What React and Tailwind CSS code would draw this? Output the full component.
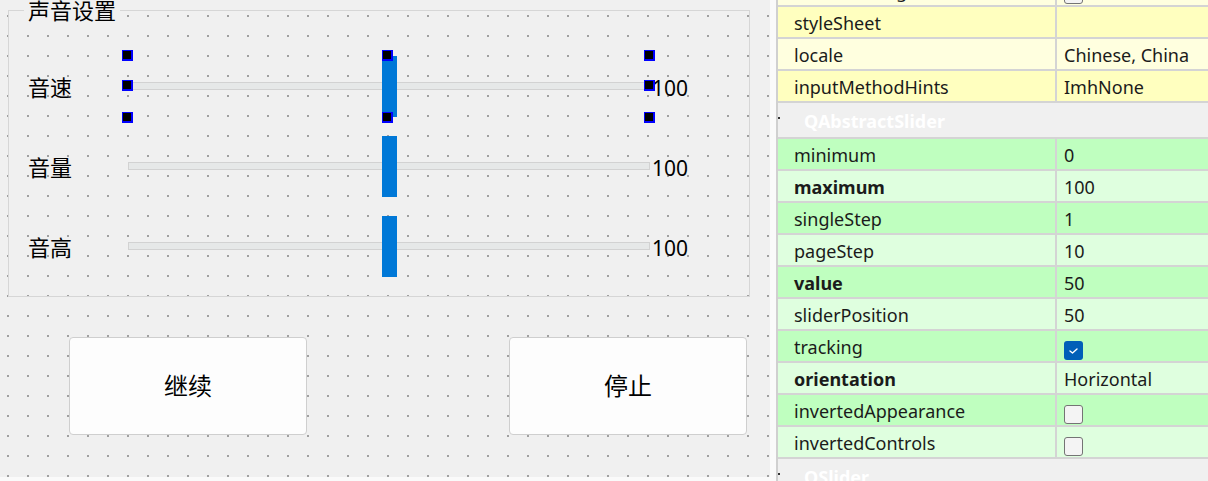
import React from "react";

const SelHandle = ({ className }) => (
  <div className={`absolute w-[11px] h-[11px] bg-[#0000ff] pl-[1px] pt-[1px] ${className}`}>
    <div className="w-[8px] h-[8px] bg-black" />
  </div>
);

const SliderRow = ({ label, selected }) => (
  <div className="flex items-center h-[62px] pl-[19px]">
    <div className="w-[100px] text-[22px] leading-[26px] text-black">{label}</div>
    <div className="relative w-[522px] h-[62px]">
      <div className="mt-[26px] h-[8px] bg-[#e6e8e8] border border-[#d2d2d2]" />
      <div className="absolute left-[254px] top-0 w-[15px] h-[61px] bg-[#0078d7]" />
      {selected && (
        <>
          <SelHandle className="left-[-6px] top-[-6px]" />
          <SelHandle className="left-[254px] top-[-6px]" />
          <SelHandle className="left-[516px] top-[-6px]" />
          <SelHandle className="left-[-6px] top-[24px]" />
          <SelHandle className="left-[516px] top-[24px]" />
          <SelHandle className="left-[-6px] top-[56px]" />
          <SelHandle className="left-[254px] top-[56px]" />
          <SelHandle className="left-[516px] top-[56px]" />
        </>
      )}
    </div>
    <div className="text-[21px] leading-[26px] text-black mt-[2px] ml-[2px]">100</div>
  </div>
);

const CheckBox = ({ checked }) =>
  checked ? (
    <div className="self-start mt-[7px] w-[19px] h-[19px] rounded-[3px] bg-[#005fb8] flex items-center justify-center">
      <svg width="19" height="19" viewBox="0 0 19 19">
        <path d="M6 10 L8.5 12 L13 8" fill="none" stroke="#ffffff" strokeWidth="1.4" strokeLinecap="round" strokeLinejoin="round" />
      </svg>
    </div>
  ) : (
    <div className="self-start mt-[7px] w-[19px] h-[19px] rounded-[3px] bg-[#f4f4f4] border border-[#747474]" />
  );

const PropRow = ({ name, value, bold, bg, check, className = "" }) => (
  <div className={`flex h-[32px] shrink-0 border-b-2 border-[#d4d4d4] ${bg} ${className}`}>
    <div
      className={`w-[279px] shrink-0 border-r-2 border-[#d4d4d4] pl-[16px] pt-[3px] flex items-center text-[18px] text-[#1b1b1b] ${
        bold ? "font-bold" : ""
      }`}
    >
      {name}
    </div>
    <div className="flex-1 pl-[7px] pt-[3px] flex items-center text-[18px] text-[#1b1b1b]">
      {check !== undefined ? <CheckBox checked={check} /> : value}
    </div>
  </div>
);

const HeaderRow = ({ title }) => (
  <div className="relative flex items-center h-[36px] shrink-0 border-b-2 border-[#d4d4d4] bg-[#f0f0f0] pl-[26px] pt-[2px]">
    <div className="absolute left-0 top-[14px] w-[2px] h-[2px] bg-[#333333]" />
    <span className="text-[18px] font-bold text-white">{title}</span>
  </div>
);

export default function App() {
  const Y = "bg-[#ffffbf]";
  const YL = "bg-[#ffffdf]";
  const G = "bg-[#bfffbf]";
  const GL = "bg-[#dfffdf]";
  return (
    <div className="w-[1208px] h-[481px] flex overflow-hidden bg-[#fafafa] font-['Noto_Sans','Noto_Sans_CJK_SC',sans-serif]">
      {/* left designer canvas */}
      <div className="w-[776px] h-full shrink-0 bg-[#fafafa]">
        <div className="w-[770px] h-[477px] bg-[#f0f0f0] bg-[radial-gradient(circle_at_1px_1px,#a0a0a0_1.5px,transparent_1.5px)] bg-[length:20px_20px] bg-[position:7px_15px]">
          <fieldset className="ml-[8px] w-[742px] h-[297px] border border-[#d6d6d6] p-0 m-0 min-w-0">
            <legend className="ml-[15px] px-[4px] bg-[#f0f0f0] text-[22px] leading-[21px] text-black">
              声音设置
            </legend>
            <div className="pt-[35px] flex flex-col gap-[18px]">
              <SliderRow label="音速" selected />
              <SliderRow label="音量" />
              <SliderRow label="音高" />
            </div>
          </fieldset>
          <div className="mt-[40px] pl-[69px] flex gap-[202px]">
            <button className="w-[238px] h-[98px] bg-[#fdfdfd] border border-[#cfcfcf] rounded-[4px] text-[24px] text-black flex items-center justify-center">
              继续
            </button>
            <button className="w-[238px] h-[98px] bg-[#fdfdfd] border border-[#cfcfcf] rounded-[4px] text-[24px] text-black flex items-center justify-center">
              停止
            </button>
          </div>
        </div>
      </div>

      {/* property editor */}
      <div className="w-[432px] h-full shrink-0 border-l-2 border-[#d0d0d0] bg-[#f0f0f0] flex flex-col overflow-hidden">
        <PropRow name="autoFillBackground" bg={YL} check={false} className="mt-[-25px]" />
        <PropRow name="styleSheet" value="" bg={Y} />
        <PropRow name="locale" value="Chinese, China" bg={YL} />
        <PropRow name="inputMethodHints" value="ImhNone" bg={Y} />
        <HeaderRow title="QAbstractSlider" />
        <PropRow name="minimum" value="0" bg={G} />
        <PropRow name="maximum" value="100" bold bg={GL} />
        <PropRow name="singleStep" value="1" bg={G} />
        <PropRow name="pageStep" value="10" bg={GL} />
        <PropRow name="value" value="50" bold bg={G} />
        <PropRow name="sliderPosition" value="50" bg={GL} />
        <PropRow name="tracking" bg={G} check={true} />
        <PropRow name="orientation" value="Horizontal" bold bg={GL} />
        <PropRow name="invertedAppearance" bg={G} check={false} />
        <PropRow name="invertedControls" bg={GL} check={false} />
        <HeaderRow title="QSlider" />
      </div>
    </div>
  );
}
